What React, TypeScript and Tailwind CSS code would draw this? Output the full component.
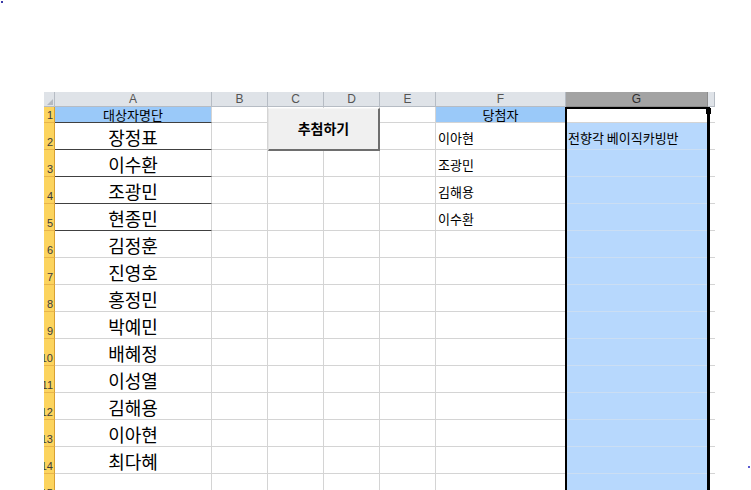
import React from 'react';

const colLetters = ['A', 'B', 'C', 'D', 'E', 'F', 'G', ''];
const colWidths = ['w-[157px]', 'w-[56px]', 'w-[56px]', 'w-[56px]', 'w-[56px]', 'w-[130px]', 'w-[142px]', 'w-[7px]'];

const nameList = ['장정표', '이수환', '조광민', '현종민', '김정훈', '진영호', '홍정민', '박예민', '배혜정', '이성열', '김해용', '이아현', '최다혜'];
const winners = ['이아현', '조광민', '김해용', '이수환'];

const kr = "font-['Noto_Sans_CJK_KR','Noto_Sans',sans-serif]";

function RowHeader({ n, tall }: { n: number; tall: boolean }) {
    return (
        <div className={`w-[11px] shrink-0 ${tall ? 'h-[27px]' : 'h-[16px]'} bg-[#fcd45e] border-b border-r border-b-[#e8b44a] border-r-[#d9a032] flex items-end justify-end overflow-hidden font-['Liberation_Sans',sans-serif] text-[11px] leading-[13px] text-[#3b3b3b]`}>
            <span className="whitespace-nowrap pr-[1px]">{n}</span>
        </div>
    );
}

function SheetRow({ n }: { n: number }) {
    const tall = n > 1;
    const h = tall ? 'h-[27px]' : 'h-[16px]';
    const name = nameList[n - 2];
    const winner = winners[n - 2];
    const darkA = n <= 5;

    return (
        <div className="flex">
            <RowHeader n={n} tall={tall} />

            {/* A */}
            <div className={`${colWidths[0]} ${h} shrink-0 border-r border-r-[#d4d4d4] border-b ${darkA ? 'border-b-[#404040]' : 'border-b-[#d4d4d4]'} ${n === 1 ? 'bg-[#9ac9f9]' : 'bg-white'} flex items-center justify-center ${kr} text-black`}>
                {n === 1 ? (
                    <span className="text-[13px] leading-[15px]">대상자명단</span>
                ) : (
                    <span className="text-[18px] leading-[20px] pt-[1px]">{name}</span>
                )}
            </div>

            {/* B - E */}
            {[1, 2, 3, 4].map(i => (
                <div key={i} className={`${colWidths[i]} ${h} shrink-0 bg-white border-r border-b border-[#d4d4d4]`} />
            ))}

            {/* F */}
            <div className={`${colWidths[5]} ${h} shrink-0 border-r border-b border-[#d4d4d4] ${n === 1 ? 'bg-[#9ac9f9] justify-center' : 'bg-white justify-start pl-[2px]'} flex items-center ${kr} text-[13px] leading-[15px] text-black`}>
                {n === 1 ? '당첨자' : <span className="pt-[2px]">{winner}</span>}
            </div>

            {/* G */}
            <div className={`${colWidths[6]} ${h} shrink-0 border-b ${n === 1 ? 'bg-white border-b-[#d4d4d4]' : 'bg-[#b7d8fd] border-b-[#cbdef3]'} flex items-center pl-[2px] ${kr} text-[13px] leading-[15px] text-black whitespace-nowrap`}>
                {n === 2 && <span className="pt-[2px]">전향각 베이직카빙반</span>}
            </div>

            {/* H */}
            <div className={`${colWidths[7]} ${h} shrink-0 bg-white border-b border-[#d4d4d4]`} />
        </div>
    );
}

export default function App() {
    const rows = Array.from({ length: 15 }, (_, i) => i + 1);

    return (
        <div className="relative w-[751px] h-[490px] overflow-hidden bg-white">
            {/* stray dots */}
            <span className="absolute left-[1px] top-[1px] w-[2px] h-[2px] bg-[#3a3aa8]" />
            <span className="absolute left-[748px] top-[466px] w-[2px] h-[2px] bg-[#5a5ad0]" />

            <div className="pt-[92px] pl-[44px]">
                <div className="relative w-[671px]">
                    {/* column header */}
                    <div className="flex h-[15px] font-['Liberation_Sans',sans-serif] text-[12px] leading-[14px]">
                        <div className="w-[11px] shrink-0 bg-[#dfe3e8] border-r border-b border-[#b6bcc4] relative">
                            <span className="absolute right-[1px] bottom-[1px] w-0 h-0 border-l-[6px] border-l-transparent border-b-[6px] border-b-[#b4b9c0]" />
                        </div>
                        {colLetters.map((c, i) => (
                            <div
                                key={i}
                                className={`${colWidths[i]} shrink-0 border-b border-r flex items-center justify-center ${c === 'G' ? 'bg-[#a3a3a3] border-[#8c8c8c] text-[#2e2e2e]' : 'bg-[#dfe3e8] border-[#b6bcc4] text-[#555]'}`}
                            >
                                {c}
                            </div>
                        ))}
                    </div>

                    {rows.map(n => (
                        <SheetRow key={n} n={n} />
                    ))}

                    {/* 추첨하기 button */}
                    <button className={`absolute left-[224px] top-[16px] w-[112px] h-[43px] bg-[#f0f0f0] border-t border-l border-t-[#f7f7f7] border-l-[#e4e4e4] border-r-2 border-b-2 border-r-[#6e6e6e] border-b-[#6e6e6e] flex justify-center pt-[11px] ${kr} text-[14px] leading-[16px] font-bold text-black`}>
                        추첨하기
                    </button>

                    {/* column G selection */}
                    <div className="absolute left-[521px] top-[15px] w-[145px] h-[400px] border-2 border-r-[3px] border-black pointer-events-none" />
                    <span className="absolute left-[662px] top-[16px] w-[5px] h-[6px] bg-black" />
                </div>
            </div>
        </div>
    );
}
